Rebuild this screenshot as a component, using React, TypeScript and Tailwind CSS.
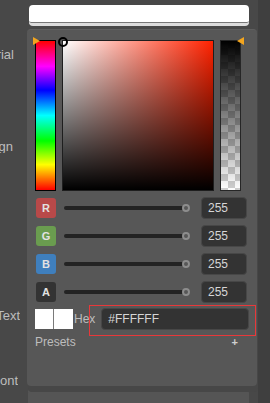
const rows = [
  { label: 'R', color: 'bg-[#b84949]' },
  { label: 'G', color: 'bg-[#6a9c4f]' },
  { label: 'B', color: 'bg-[#3f7fbd]' },
  { label: 'A', color: 'bg-[#333333]' },
]

function Channel({ label, color }: { label: string; color: string }) {
  return (
    <div className="flex h-[22px] items-center">
      <div
        className={`ml-px flex h-5 w-5 items-center justify-center rounded-[3px] text-[11px] font-bold text-[#e2e2e2] ${color}`}
      >
        {label}
      </div>
      {/* slider */}
      <div className="relative ml-2 flex h-[10px] w-[126px] items-center">
        <div className="h-1 w-full rounded-full bg-[#232323]" />
        <div className="absolute right-0 top-[1px] h-2 w-2 rounded-full border-2 border-[#8d8d8d] bg-[#575757]" />
      </div>
      <div className="ml-[11px] flex h-[22px] w-[46px] items-center rounded-[4px] border border-[#474747] bg-[#333333] pl-[6px] text-[12px] text-[#d6d6d6]">
        255
      </div>
    </div>
  )
}

export default function App() {
  return (
    <div className="relative h-[403px] w-[270px] overflow-hidden bg-[#464646] font-['Liberation_Sans',Arial,sans-serif]">
      <div className="flex h-full">
        {/* form behind the picker */}
        <div className="flex w-[258px] flex-col bg-[#484848] text-[13px] leading-4 text-[#bdbdbd]">
          <div className="ml-[29px] mt-[5px] h-[23px] w-[220px] rounded-sm border-b-[3px] border-[#dcdcdc] bg-white shadow-[inset_0_-1px_0_#777]" />
          <div className="mt-[21px] flex h-4 w-[14px] justify-end overflow-hidden whitespace-nowrap">Material</div>
          <div className="mt-[78px] flex h-4 w-[13px] justify-end overflow-hidden whitespace-nowrap">Align</div>
          <div className="mt-[155px] flex h-4 w-[20px] justify-end overflow-hidden whitespace-nowrap">Text</div>
          <div className="mt-[51px] flex h-4 w-[18px] justify-end overflow-hidden whitespace-nowrap">Font</div>
          <div className="ml-[28px] mt-[2px] h-4 w-[221px] rounded-t-[4px] border-t border-[#606060] bg-[#555555]" />
        </div>
        <div className="flex-1 bg-[#3f3f3f]" />
      </div>

      {/* color picker popup */}
      <div className="absolute left-[27px] top-[29px] h-[357px] w-[230px] rounded-[4px] border-t border-[#5e5e5e] bg-[#575757] pl-2 pt-[10px] text-[12px] text-[#bdbdbd] shadow-[1px_6px_0_#474747]">
        <div className="flex items-start">
          {/* hue */}
          <div className="relative h-[151px] w-[21px] border border-black bg-[linear-gradient(to_bottom,#ff0000_0%,#ff00ff_17%,#0000ff_33%,#00ffff_50%,#00ff00_67%,#ffff00_83%,#ff0000_100%)]">
            <svg className="absolute -left-[3px] -top-[4px]" width="7" height="8" viewBox="0 0 7 8">
              <polygon points="0,0 7,4 0,8" fill="#f2a51f" />
            </svg>
          </div>
          {/* saturation / value */}
          <div className="relative ml-[6px] h-[151px] w-[152px] border border-[#1e1e1e] bg-[linear-gradient(to_right,#ffffff,#ff2200)]">
            <div className="absolute inset-0 bg-[linear-gradient(to_bottom,rgba(0,0,0,0),#000000)]" />
            <div className="absolute -left-[5px] -top-[4px] h-[10px] w-[10px] rounded-full border-2 border-black" />
          </div>
          {/* alpha */}
          <div className="relative ml-[6px] h-[151px] w-[21px] border border-[#262626] bg-[conic-gradient(#cfcfcf_25%,#ffffff_0_50%,#cfcfcf_0_75%,#ffffff_0)] bg-[length:14px_14px]">
            <div className="absolute inset-0 bg-[linear-gradient(to_bottom,#000000,rgba(0,0,0,0))]" />
            <svg className="absolute left-[16px] -top-[4px]" width="7" height="8" viewBox="0 0 7 8">
              <polygon points="7,0 0,4 7,8" fill="#f2a51f" />
            </svg>
          </div>
        </div>

        <div className="mt-[6px] flex flex-col gap-[6px]">
          {rows.map((r) => (
            <Channel key={r.label} label={r.label} color={r.color} />
          ))}
        </div>

        <div className="mt-[5px] flex h-[22px] items-center">
          <div className="flex h-5 gap-px bg-[#7a7a7a]">
            <div className="w-[18px] bg-white" />
            <div className="w-[19px] bg-white" />
          </div>
          <span className="ml-px">Hex</span>
          <div className="relative ml-[6px] flex h-[22px] w-[148px] items-center rounded-[4px] border border-[#474747] bg-[#333333] pl-[6px] text-[#d6d6d6]">
            #FFFFFF
            <div className="absolute -bottom-[7px] -left-[13px] -right-[8px] -top-[4px] border border-solid border-[#e8383a]" />
          </div>
        </div>

        <div className="mt-[3px] flex w-[203px] items-center justify-between">
          <span>Presets</span>
          <span className="text-[11px] font-bold text-[#cfcfcf]">+</span>
        </div>
      </div>
    </div>
  )
}
